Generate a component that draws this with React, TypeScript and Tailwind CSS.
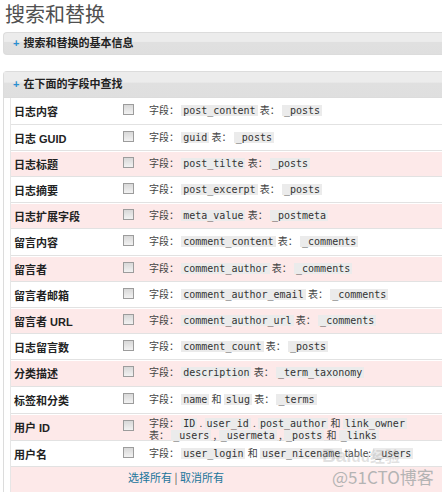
import React from "react";

const C = ({ children }: { children: React.ReactNode }) => (
  <code className="bg-[#ebebeb] px-[2px] text-[#333] text-[10px] [font-family:'DejaVu_Sans_Mono',monospace]">
    {children}
  </code>
);

type Row = { label: string; h: number; pink: boolean; field: React.ReactNode; two?: boolean };

const std = (a: string, b: string) => (
  <>
    字段： <C>{a}</C> 表： <C>{b}</C>
  </>
);

const rows: Row[] = [
  { label: "日志内容", h: 27, pink: false, field: std("post_content", "_posts") },
  { label: "日志 GUID", h: 26, pink: false, field: std("guid", "_posts") },
  { label: "日志标题", h: 26, pink: true, field: std("post_tilte", "_posts") },
  { label: "日志摘要", h: 26, pink: false, field: std("post_excerpt", "_posts") },
  { label: "日志扩展字段", h: 26, pink: true, field: std("meta_value", "_postmeta") },
  { label: "留言内容", h: 27, pink: false, field: std("comment_content", "_comments") },
  { label: "留言者", h: 26, pink: true, field: std("comment_author", "_comments") },
  { label: "留言者邮箱", h: 26, pink: false, field: std("comment_author_email", "_comments") },
  { label: "留言者 URL", h: 26, pink: true, field: std("comment_author_url", "_comments") },
  { label: "日志留言数", h: 26, pink: false, field: std("comment_count", "_posts") },
  { label: "分类描述", h: 27, pink: true, field: std("description", "_term_taxonomy") },
  {
    label: "标签和分类",
    h: 27,
    pink: false,
    field: (
      <>
        字段： <C>name</C> 和 <C>slug</C> 表： <C>_terms</C>
      </>
    ),
  },
  {
    label: "用户 ID",
    h: 27,
    pink: true,
    two: true,
    field: (
      <>
        字段： <C>ID</C> . <C>user_id</C> . <C>post_author</C> 和 <C>link_owner</C>
        <br />
        表： <C>_users</C> , <C>_usermeta</C> , <C>_posts</C> 和 <C>_links</C>
      </>
    ),
  },
  {
    label: "用户名",
    h: 26,
    pink: false,
    field: (
      <>
        字段： <C>user_login</C> 和 <C>user_nicename</C> table: <C>_users</C>
      </>
    ),
  },
];

export default function App() {
  return (
    <div className="relative w-[442px] h-[492px] overflow-hidden bg-white text-[#333] [font-family:'Liberation_Sans','Noto_Sans_CJK_SC',sans-serif]">
      <h2 className="h-[28px] leading-[28px] pl-[5px] text-[20px] font-normal text-[#505050] [font-family:'Noto_Sans_CJK_SC',sans-serif]">
        搜索和替换
      </h2>

      <div className="mt-[4px] ml-[3px] h-[23px] rounded-l-[4px] border border-r-0 border-[#dcdcdc] bg-[linear-gradient(#ececec_0%,#ececec_40%,#e0e0e0_45%,#dfdfdf_100%)] flex items-center pl-[9px] text-[11px] font-bold text-[#222]">
        <span className="text-[#2a8fd0] mr-[4px]">+</span>
        <span>搜索和替换的基本信息</span>
      </div>

      <div className="mt-[16px] ml-[3px] border-l border-t border-[#dcdcdc] rounded-tl-[4px]">
        <div className="h-[26px] bg-[linear-gradient(#ececec_0%,#ececec_40%,#e0e0e0_45%,#dfdfdf_100%)] flex items-center pl-[9px] text-[11px] font-bold text-[#222] border-b border-[#dcdcdc]">
          <span className="text-[#2a8fd0] mr-[4px]">+</span>
          <span>在下面的字段中查找</span>
        </div>
        <div className="pl-[6px]">
          <div className="border-l border-[#e6e6e6]">
            {rows.map((r) => (
              <div
                key={r.label}
                className={`flex border-t border-white border-b border-b-[#e2e2e2] ${r.pink ? "bg-[#fde9e9]" : "bg-white"}`}
                style={{ height: r.h }}
              >
                <div className="w-[112px] shrink-0 pl-[3px] flex items-center pt-[2px] text-[11px] font-bold text-[#222]">
                  {r.label}
                </div>
                <div className="w-[26px] shrink-0 pt-[5px]">
                  <div className="w-[11px] h-[11px] border border-[#9c9c9c] bg-[linear-gradient(#d8d8d8,#f2f2f2)]" />
                </div>
                <div
                  className={`flex-1 whitespace-nowrap text-[10px] text-[#444] [font-family:'Noto_Sans_CJK_SC',sans-serif] ${r.two ? "pt-[2px] leading-[11px]" : "pt-[4px] leading-[13px]"}`}
                >
                  {r.field}
                </div>
              </div>
            ))}
            <div className="h-[30px] bg-[#fde9e9] pl-[117px] pt-[2px] text-[11px] text-[#21759b] [font-family:'Noto_Sans_CJK_SC',sans-serif]">
              选择所有 <span className="text-[#555]">|</span> 取消所有
            </div>
          </div>
        </div>
      </div>

      <div className="absolute left-[322px] top-[446px] text-[19px] font-bold text-[rgba(170,170,170,0.35)] [font-family:'Liberation_Sans',sans-serif] leading-none">
        Bai<span className="text-[15px]">du</span>
        <span className="text-[15px] [font-family:'Noto_Sans_CJK_SC',sans-serif]">经验</span>
      </div>
      <div className="absolute left-[332px] top-[466px] text-[17px] leading-[22px] text-[#b4b4b4] [font-family:'Noto_Sans_CJK_SC',sans-serif]">
        @51CTO博客
      </div>
    </div>
  );
}
